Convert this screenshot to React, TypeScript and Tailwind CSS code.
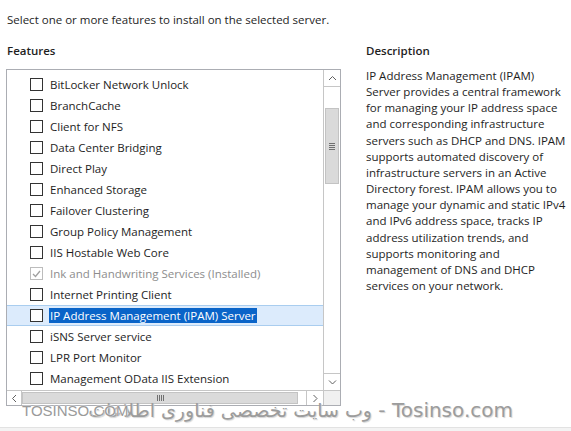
import type { ReactNode } from "react";

const features = [
  { name: "BitLocker Network Unlock" },
  { name: "BranchCache" },
  { name: "Client for NFS" },
  { name: "Data Center Bridging" },
  { name: "Direct Play" },
  { name: "Enhanced Storage" },
  { name: "Failover Clustering" },
  { name: "Group Policy Management" },
  { name: "IIS Hostable Web Core" },
  { name: "Ink and Handwriting Services (Installed)", installed: true },
  { name: "Internet Printing Client" },
  { name: "IP Address Management (IPAM) Server", selected: true },
  { name: "iSNS Server service" },
  { name: "LPR Port Monitor" },
  { name: "Management OData IIS Extension" },
];

const description = [
  "IP Address Management (IPAM)",
  "Server provides a central framework",
  "for managing your IP address space",
  "and corresponding infrastructure",
  "servers such as DHCP and DNS. IPAM",
  "supports automated discovery of",
  "infrastructure servers in an Active",
  "Directory forest. IPAM allows you to",
  "manage your dynamic and static IPv4",
  "and IPv6 address space, tracks IP",
  "address utilization trends, and",
  "supports monitoring and",
  "management of DNS and DHCP",
  "services on your network.",
];

function Chevron({ dir }: { dir: "up" | "down" | "left" | "right" }) {
  const d = {
    up: "M1 5 L4.5 1.5 L8 5",
    down: "M1 1.5 L4.5 5 L8 1.5",
    left: "M5 1 L1.5 4.5 L5 8",
    right: "M1.5 1 L5 4.5 L1.5 8",
  }[dir];
  const vertical = dir === "up" || dir === "down";
  return (
    <svg
      width={vertical ? 9 : 7}
      height={vertical ? 7 : 9}
      viewBox={vertical ? "0 0 9 7" : "0 0 7 9"}
      fill="none"
      stroke="#606060"
      strokeWidth="1"
    >
      <path d={d} />
    </svg>
  );
}

function Checkbox({ checked, disabled }: { checked?: boolean; disabled?: boolean }) {
  return (
    <span
      className={`flex h-[13px] w-[13px] shrink-0 items-center justify-center border bg-white ${
        disabled ? "border-[#bcbcbc]" : "border-[#333333]"
      }`}
    >
      {checked && (
        <svg width="9" height="8" viewBox="0 0 9 8" fill="none" stroke="#a0a0a0" strokeWidth="1.3">
          <path d="M1 4 L3.5 6.5 L8 1" />
        </svg>
      )}
    </span>
  );
}

function Row({
  name,
  installed,
  selected,
}: {
  name: string;
  installed?: boolean;
  selected?: boolean;
}) {
  return (
    <div
      className={`flex h-[21px] shrink-0 items-center pl-[23px] ${
        selected ? "border-y border-[#a9cdef] bg-[#dcebfc]" : ""
      }`}
    >
      <Checkbox checked={installed} disabled={installed} />
      <span
        className={`ml-[6px] whitespace-nowrap px-[1px] leading-[15px] ${
          installed ? "text-[#8d8d8d]" : selected ? "bg-[#0a64c8] text-white" : "text-[#1e1e1e]"
        }`}
      >
        {name}
      </span>
    </div>
  );
}

function ScrollButton({ children, className }: { children: ReactNode; className: string }) {
  return (
    <div className={`flex shrink-0 items-center justify-center border-[#c6c6c6] bg-white ${className}`}>
      {children}
    </div>
  );
}

function FeatureList() {
  return (
    <div className="flex h-[337px] w-[335px] flex-col border border-[#abadb3]">
      <div className="flex min-h-0 flex-1">
        <div className="flex min-w-0 flex-1 flex-col overflow-hidden pt-[4px]">
          {features.map((f) => (
            <Row key={f.name} {...f} />
          ))}
        </div>
        <div className="flex w-[17px] flex-col border-l border-[#c6c6c6]">
          <ScrollButton className="h-[17px] border-b">
            <Chevron dir="up" />
          </ScrollButton>
          <div className="flex flex-1 flex-col px-[1px] pt-[21px]">
            <div className="flex h-[76px] flex-col items-center justify-center gap-[1px] border border-[#c3c3c3] bg-[#dadada]">
              <span className="h-[1px] w-[6px] bg-[#707070]" />
              <span className="h-[1px] w-[6px] bg-[#707070]" />
              <span className="h-[1px] w-[6px] bg-[#707070]" />
              <span className="h-[1px] w-[6px] bg-[#707070]" />
            </div>
          </div>
          <ScrollButton className="h-[17px] border-t">
            <Chevron dir="down" />
          </ScrollButton>
        </div>
      </div>
      <div className="flex h-[15px] border-t border-[#c6c6c6]">
        <ScrollButton className="w-[15px] border-r">
          <Chevron dir="left" />
        </ScrollButton>
        <div className="flex flex-1 py-[1px]">
          <div className="flex w-[276px] items-center justify-center gap-[1px] border border-[#c3c3c3] bg-[#dadada]">
            <span className="h-[6px] w-[1px] bg-[#707070]" />
            <span className="h-[6px] w-[1px] bg-[#707070]" />
            <span className="h-[6px] w-[1px] bg-[#707070]" />
            <span className="h-[6px] w-[1px] bg-[#707070]" />
          </div>
        </div>
        <ScrollButton className="w-[17px] border-l">
          <Chevron dir="right" />
        </ScrollButton>
        <div className="w-[17px] border-l border-[#c6c6c6] bg-[#f0f0f0]" />
      </div>
    </div>
  );
}

export default function App() {
  return (
    <div className="relative flex h-[431px] w-[571px] flex-col overflow-hidden bg-white font-['Open_Sans','Noto_Sans',sans-serif] text-[11.5px] text-[#1e1e1e]">
      <div className="flex-1 px-[6px] pt-[12px]">
        <p className="pl-[1px] leading-[16px]">Select one or more features to install on the selected server.</p>
        <div className="mt-[15px] flex">
          <div className="flex flex-col">
            <h2 className="pl-[1px] font-semibold leading-[16px]">Features</h2>
            <div className="mt-[10px]">
              <FeatureList />
            </div>
          </div>
          <div className="ml-[25px] flex w-[205px] flex-col">
            <h2 className="font-semibold leading-[16px]">Description</h2>
            <p className="mt-[9px] leading-[16.15px]">
              {description.map((line) => (
                <span key={line} className="block whitespace-nowrap">
                  {line}
                </span>
              ))}
            </p>
          </div>
        </div>
      </div>
      <div className="h-[4px] border-t border-[#e2e2e2] bg-[#f3f3f3]" />

      {/* site watermark burned into the screenshot */}
      <div className="pointer-events-none absolute right-[58px] top-[399px] flex items-center whitespace-nowrap font-['DejaVu_Sans',sans-serif] text-[20px] leading-[22px] text-[#9c9c9c] [text-shadow:1px_1px_1px_#d4d4d4]">
        <span dir="rtl" className="text-[19px]">
          وب سایت تخصصی فناوری اطلاعات
        </span>
        <span>&nbsp;- Tosinso.com</span>
      </div>
      <div className="pointer-events-none absolute left-[22px] top-[403px] font-['Liberation_Sans',sans-serif] text-[15px] leading-[15px] text-[#9a9a9a] [text-shadow:0_0_2px_#ffffff,0_0_1px_#ffffff]">
        TOSINSO.COM
      </div>
    </div>
  );
}
